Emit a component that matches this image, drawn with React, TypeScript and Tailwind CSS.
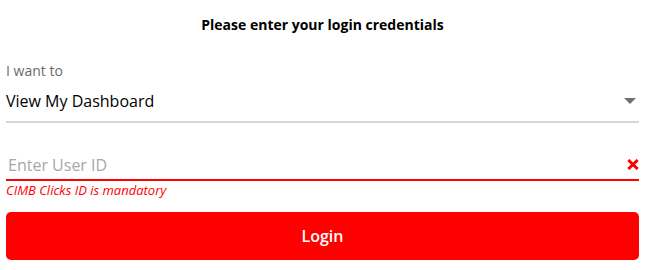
export default function App() {
  return (
    <div className="w-[652px] h-[270px] bg-white pl-[6px] pr-[13px] font-['Open_Sans',sans-serif]">
      <h1 className="pt-[15px] h-[60px] text-center text-[14px] leading-[20px] font-bold text-black">
        Please enter your login credentials
      </h1>

      <div className="h-[63px] border-b-2 border-[#d6d6d6]">
        <p className="h-[20px] pt-[2px] text-[14px] leading-[18px] text-[#6b6b6b]">I want to</p>
        <div className="flex items-center justify-between h-[41px]">
          <span className="text-[16px] leading-[22px] text-black">View My Dashboard</span>
          <span className="mr-[3px] w-0 h-0 border-l-[6px] border-r-[6px] border-t-[6px] border-l-transparent border-r-transparent border-t-[#707070]" />
        </div>
      </div>

      <div className="flex items-end justify-between h-[58px] pb-[3px] border-b-2 border-[#ff0000]">
        <span className="pl-[2px] text-[16px] leading-[22px] text-[#a8a8a8]">Enter User ID</span>
        <svg width="12" height="11" viewBox="0 0 12 11" className="mb-[6px]">
          <path d="M1.3 1 L10.7 10 M10.7 1 L1.3 10" stroke="#ff0000" strokeWidth="3" />
        </svg>
      </div>

      <p className="h-[31px] text-[13px] leading-[18px] italic text-[#ff0000]">
        CIMB Clicks ID is mandatory
      </p>

      <button className="w-full h-[48px] rounded-[5px] bg-[#ff0000] text-white text-[16px] font-semibold">
        Login
      </button>
    </div>
  );
}
